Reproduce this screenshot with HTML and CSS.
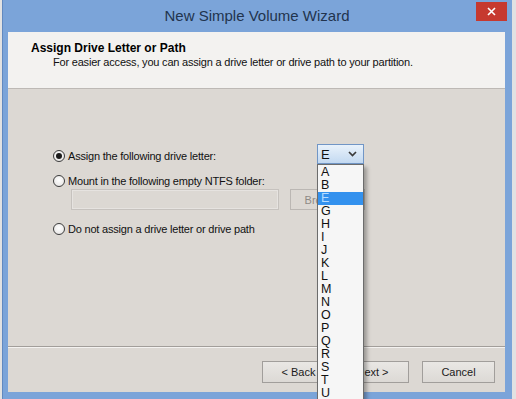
FILE: index.html
```html
<!DOCTYPE html>
<html lang="en">
<head>
  <meta charset="UTF-8">
  <title>New Simple Volume Wizard</title>
  <link rel="stylesheet" href="styles.css">
</head>
<body>

  <div class="window">
    <div class="titlebar">
      <span></span>
      <span class="title">New Simple Volume Wizard</span>
      <button class="close" aria-label="Close">
        <svg width="9" height="9" viewBox="0 0 9 9"><path d="M1 1 L8 8 M8 1 L1 8" stroke="#fff" stroke-width="1.6" fill="none"/></svg>
      </button>
    </div>

    <div class="client">
      <div class="header">
        <h1>Assign Drive Letter or Path</h1>
        <p>For easier access, you can assign a drive letter or drive path to your partition.</p>
      </div>

      <div class="content">
        <div class="letter-row">
          <label class="radio first"><span class="dot checked"></span>Assign the following drive letter:</label>
          <div class="combo">
            <span>E</span>
            <svg width="9" height="6" viewBox="0 0 9 6"><path d="M1 1 L4.5 4.5 L8 1" stroke="#3a3a3a" stroke-width="1.7" fill="none"/></svg>
            <ul class="drop-list">
              <li>A</li>
              <li>B</li>
              <li class="selected">E</li>
              <li>G</li>
              <li>H</li>
              <li>I</li>
              <li>J</li>
              <li>K</li>
              <li>L</li>
              <li>M</li>
              <li>N</li>
              <li>O</li>
              <li>P</li>
              <li>Q</li>
              <li>R</li>
              <li>S</li>
              <li>T</li>
              <li>U</li>
            </ul>
          </div>
        </div>

        <label class="radio second"><span class="dot"></span>Mount in the following empty NTFS folder:</label>

        <div class="folder-row">
          <span class="field"></span>
          <button class="browse" disabled>Browse...</button>
        </div>

        <label class="radio third"><span class="dot"></span>Do not assign a drive letter or drive path</label>
      </div>

      <div class="footer">
        <button class="btn back">&lt; Back</button>
        <button class="btn next">Next &gt;</button>
        <button class="btn">Cancel</button>
      </div>
    </div>
  </div>

</body>
</html>
```

FILE: styles.css
```css
body {
  margin: 0;
  background: #e2e2e2;
  overflow: hidden;
  font-family: 'Liberation Sans', Arial, sans-serif;
  color: #111;
}

.window {
  margin-left: 2px;
  width: 510px;
  height: 399px;
  background: #7ba4d9;
  border-left: 1px solid #6189c0;
  box-sizing: border-box;
  display: flex;
  flex-direction: column;
}

.titlebar {
  height: 32px;
  flex: none;
  display: grid;
  grid-template-columns: 31px 1fr 31px;
  padding: 0 5px 0 4px;
}

.title {
  text-align: center;
  font-size: 15px;
  line-height: 32px;
  color: #22344e;
}

.close {
  margin-top: 2px;
  height: 19px;
  padding: 0;
  border: none;
  background: #c6392f;
  display: flex;
  align-items: center;
  justify-content: center;
}

.client {
  margin: 0 7px 0 5px;
  height: 360px;
  background: #dcd8d3;
  display: flex;
  flex-direction: column;
}

.header {
  height: 57px;
  box-sizing: border-box;
  padding: 9px 0 0 23px;
  background: #f3f2f0;
  border-bottom: 1px solid #bdb9b5;
}

.header h1 {
  margin: 0;
  font-size: 12px;
  line-height: 15px;
  font-weight: bold;
  color: #000;
}

.header p {
  margin: 0 0 0 22px;
  font-size: 11px;
  line-height: 13px;
  letter-spacing: -0.2px;
}

.content {
  flex: 1;
  padding: 55px 0 0 45px;
  position: relative;
  z-index: 2;
}

.letter-row {
  display: flex;
  align-items: flex-start;
}

.radio {
  display: flex;
  align-items: center;
  gap: 3px;
  font-size: 11px;
  line-height: 14px;
  letter-spacing: -0.2px;
}

.radio.first {
  width: 264px;
  margin-top: 5px;
}

.radio.second {
  margin-top: 10px;
}

.radio.third {
  margin-top: 12px;
}

.dot {
  width: 12px;
  height: 12px;
  box-sizing: border-box;
  border: 1px solid #3c3c3c;
  border-radius: 50%;
  background: radial-gradient(circle at 50% 40%, #ffffff, #e2e0de);
  display: flex;
  align-items: center;
  justify-content: center;
}

.dot.checked::after {
  content: '';
  width: 6px;
  height: 6px;
  border-radius: 50%;
  background: #1b1b1b;
}

.combo {
  position: relative;
  width: 47px;
  height: 20px;
  box-sizing: border-box;
  border: 1px solid #7196c6;
  background: linear-gradient(#e9f2fb, #c3d9f1);
  display: flex;
  align-items: center;
  justify-content: space-between;
  padding: 0 6px 0 3px;
  font-size: 13px;
}

.drop-list {
  position: absolute;
  top: 19px;
  left: -1px;
  width: 47px;
  box-sizing: border-box;
  margin: 0;
  padding: 1px 0 0;
  list-style: none;
  background: #f6f6f6;
  border: 1px solid #6c6c6c;
  box-shadow: 3px 3px 4px rgba(0, 0, 0, 0.3);
  font-size: 12.5px;
  line-height: 13px;
  color: #111;
}

.drop-list li {
  padding-left: 3px;
  height: 13px;
}

.drop-list .selected {
  background: #3391ee;
  color: #b6dcff;
}

.folder-row {
  display: flex;
  margin-top: 1px;
}

.field {
  margin-left: 18px;
  width: 208px;
  height: 21px;
  box-sizing: border-box;
  border: 1px solid #c6c2be;
  box-shadow: inset 0 0 0 1px #e6e3e0;
}

.browse {
  margin-left: 11px;
  width: 75px;
  height: 21px;
  padding: 0;
  border: 1px solid #bbb7b3;
  background: #dcd8d3;
  color: #8e8a86;
  font-family: inherit;
  font-size: 11px;
}

.footer {
  height: 46px;
  box-sizing: border-box;
  border-top: 1px solid #a29e9a;
  box-shadow: inset 0 1px 0 #f4f2f0;
  padding: 14px 10px 0 0;
  display: flex;
  justify-content: flex-end;
  align-items: flex-start;
}

.btn {
  width: 73px;
  height: 22px;
  padding: 0;
  border: 1px solid #a19e9b;
  background: linear-gradient(#e9e7e4, #dcd9d5);
  color: #1a1a1a;
  font-family: inherit;
  font-size: 11px;
}

.btn.back {
  margin-right: 1px;
}

.btn.next {
  margin-right: 13px;
}
```
